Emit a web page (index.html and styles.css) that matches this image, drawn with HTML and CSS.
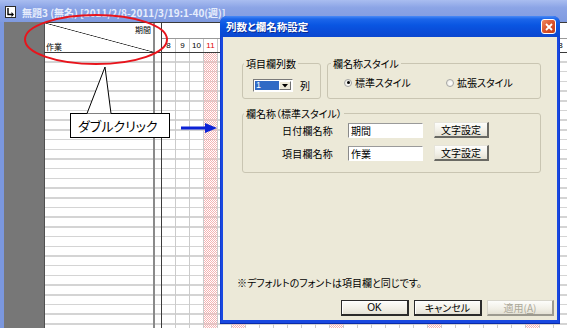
FILE: index.html
```html
<!DOCTYPE html>
<html lang="ja">
<head>
<meta charset="utf-8">
<title>列数と欄名称設定</title>
<link rel="stylesheet" href="styles.css">
</head>
<body>
<div class="screen">
  <div class="app">
    <div class="app-title">
      <svg class="app-icon" width="11" height="12" viewBox="0 0 11 12">
        <rect x="0.5" y="0.5" width="10" height="11" fill="#fff" stroke="#2b2b2b"/>
        <path d="M3 2 V8.5 H7" fill="none" stroke="#000" stroke-width="1.4"/>
        <path d="M6.5 6 L9 8.5 L6.5 11 Z" fill="#000"/>
      </svg>
      <span>無題3 (無名) [2011/2/8-2011/3/19:1-40(週)]</span>
    </div>
    <div class="app-body">
      <div class="side"></div>
      <div class="sheet">
        <div class="sheet-head">
          <div class="corner"><span class="corner-top">期間</span><span class="corner-bottom">作業</span></div>
          <div class="sep"></div>
          <div class="date-head">
            <div class="date-top"></div>
            <div class="date-nums">
              <span class="dn">8</span><span class="dn">9</span><span class="dn">10</span><span class="dn red">11</span><span class="dn">12</span><span class="dn red">13</span><span class="dn">14</span><span class="dn">15</span><span class="dn">16</span><span class="dn">17</span><span class="dn">18</span><span class="dn">19</span><span class="dn red">20</span><span class="dn">21</span><span class="dn">22</span><span class="dn">23</span><span class="dn">24</span><span class="dn">25</span><span class="dn">26</span><span class="dn red">27</span><span class="dn">28</span><span class="dn">1</span><span class="dn">2</span><span class="dn">3</span><span class="dn">4</span><span class="dn">5</span><span class="dn red">6</span><span class="dn">7</span><span class="dn">8</span>
            </div>
          </div>
        </div>
        <div class="sheet-body">
          <div class="rh-body"></div>
          <div class="sep"></div>
          <div class="date-cols">
            <span class="dc"></span><span class="dc"></span><span class="dc"></span><span class="dc off"></span><span class="dc"></span><span class="dc off"></span><span class="dc"></span><span class="dc"></span><span class="dc"></span><span class="dc"></span><span class="dc"></span><span class="dc"></span><span class="dc off"></span><span class="dc"></span><span class="dc"></span><span class="dc"></span><span class="dc"></span><span class="dc"></span><span class="dc"></span><span class="dc off"></span><span class="dc"></span><span class="dc"></span><span class="dc"></span><span class="dc"></span><span class="dc"></span><span class="dc"></span><span class="dc off"></span><span class="dc"></span><span class="dc"></span>
          </div>
        </div>
      </div>
    </div>
  </div>

  <svg class="mark-ellipse" width="148" height="54" viewBox="0 0 148 54">
    <ellipse cx="72" cy="25.5" rx="71" ry="24.5" fill="none" stroke="#e8141c" stroke-width="2"/>
  </svg>

  <div class="callout">ダブルクリック</div>
  <svg class="callout-tail" width="28" height="49" viewBox="0 0 28 49">
    <polyline points="2,48.5 20,2 26,48.5" fill="#fff" stroke="#000" stroke-width="1"/>
  </svg>

  <svg class="arrow" width="38" height="12" viewBox="0 0 38 12">
    <line x1="1" y1="6" x2="27" y2="6" stroke="#0c22d6" stroke-width="3"/>
    <polygon points="25,1 37,6 25,11" fill="#0c22d6"/>
  </svg>

  <div class="dialog">
    <div class="dlg-title">
      <span class="dlg-caption">列数と欄名称設定</span>
      <span class="dlg-close">
        <svg width="8" height="8" viewBox="0 0 8 8"><path d="M1 1 L7 7 M7 1 L1 7" stroke="#fff" stroke-width="1.8"/></svg>
      </span>
    </div>
    <div class="dlg-body">
      <div class="grp-row">
        <div class="grp grp-cols">
          <span class="grp-label">項目欄列数</span>
          <div class="combo">
            <span class="combo-val">1</span>
            <span class="combo-btn"><svg width="6" height="4" viewBox="0 0 6 4"><polygon points="0,0 6,0 3,3.5" fill="#000"/></svg></span>
          </div>
          <span class="unit">列</span>
        </div>
        <div class="grp grp-style">
          <span class="grp-label grp-label-wide">欄名称スタイル</span>
          <span class="radio radio-first"><span class="radio-dot checked"></span>標準スタイル</span>
          <span class="radio"><span class="radio-dot"></span>拡張スタイル</span>
        </div>
      </div>
      <div class="grp grp-names">
        <span class="grp-label">欄名称（標準スタイル）</span>
        <div class="name-row">
          <span class="name-label">日付欄名称</span>
          <span class="field">期間</span>
          <span class="btn btn-raised">文字設定</span>
        </div>
        <div class="name-row">
          <span class="name-label">項目欄名称</span>
          <span class="field">作業</span>
          <span class="btn btn-raised">文字設定</span>
        </div>
      </div>
      <p class="note">※デフォルトのフォントは項目欄と同じです。</p>
      <div class="actions">
        <span class="btn btn-frame btn-ok">OK</span>
        <span class="btn btn-frame btn-cancel">キャンセル</span>
        <span class="btn btn-disabled btn-apply">適用(<u>A</u>)</span>
      </div>
    </div>
  </div>
</div>
</body>
</html>
```
FILE: styles.css
```css
* { box-sizing: border-box; margin: 0; padding: 0; }

body {
  margin: 0;
  width: 567px;
  height: 328px;
  overflow: hidden;
  background: #fff;
  font-family: "Noto Sans CJK JP", "Noto Sans", sans-serif;
  font-feature-settings: "palt";
  color: #000;
}

.screen {
  position: relative;
  width: 567px;
  height: 328px;
  overflow: hidden;
  background: #fff;
}

/* background application window */
.app { display: flex; flex-direction: column; height: 100%; }

.app-title {
  height: 22px;
  flex: none;
  display: flex;
  align-items: center;
  gap: 6px;
  padding: 2px 0 0 5px;
  background: linear-gradient(#a9bdf0, #8ba4e6 35%, #7f9ae0);
  color: #e6edfc;
  font-size: 10px;
  font-weight: bold;
  white-space: nowrap;
}
.app-icon { flex: none; }

.app-body { flex: 1; display: flex; min-height: 0; }

.side {
  width: 44px;
  flex: none;
  background: #777;
  border-left: 4px solid #7b97de;
}

.sheet {
  flex: 1;
  display: flex;
  flex-direction: column;
  border-top: 1px solid #3a3a3a;
  background: #fff;
}

.sheet-head {
  height: 30px;
  flex: none;
  display: flex;
  border-bottom: 1px solid #3a3a3a;
}

.corner {
  width: 109px;
  flex: none;
  border-left: 1px solid #505050;
  display: flex;
  flex-direction: column;
  justify-content: space-between;
  padding: 2px 2px 0 1px;
  font-size: 8px;
  line-height: 10px;
  background: linear-gradient(to top right, transparent calc(50% - 0.7px), #2a2a2a 50%, transparent calc(50% + 0.7px));
}
.corner-top { align-self: flex-end; }
.corner-bottom { align-self: flex-start; }

.sep {
  width: 9px;
  flex: none;
  border-left: 2px solid #8a8a8a;
  border-right: 1px solid #3c3c3c;
}

.date-head { flex: 1; display: flex; flex-direction: column; min-width: 0; }
.date-top { height: 16px; border-bottom: 1px solid #9a9a9a; }
.date-nums { height: 13px; display: flex; }
.dn {
  width: 14px;
  flex: none;
  border-right: 1px solid #c8c8c8;
  text-align: center;
  font-family: "Liberation Sans", Arial, sans-serif;
  font-size: 8px;
  line-height: 13px;
}
.dn.red { color: #e00000; }

.sheet-body {
  flex: 1;
  display: flex;
  background: repeating-linear-gradient(to bottom, transparent 0, transparent 8.2px, #d4d4d4 8.2px, #d4d4d4 9.7px);
}
.rh-body { width: 109px; flex: none; border-left: 1px solid #505050; }
.date-cols { flex: 1; display: flex; min-width: 0; }
.dc { width: 14px; flex: none; border-right: 1px solid #cbcbcb; }
.dc.off {
  background: repeating-conic-gradient(#f5b3b3 0 25%, transparent 0 50%) 0 0 / 2px 2px;
}

/* annotations */
.mark-ellipse { position: absolute; left: 24px; top: 14px; }

.callout {
  position: absolute;
  left: 70px;
  top: 113px;
  width: 100px;
  height: 25px;
  border: 1px solid #000;
  background: #fff;
  padding-left: 7px;
  font-size: 13px;
  line-height: 23px;
  white-space: nowrap;
}
.callout-tail { position: absolute; left: 85px; top: 65px; }

.arrow { position: absolute; left: 180px; top: 122px; }

/* dialog window */
.dialog {
  position: absolute;
  left: 220px;
  top: 16px;
  width: 340px;
  height: 308px;
  display: flex;
  flex-direction: column;
  padding: 0 3px 3px;
  background: linear-gradient(to right, #0a2fc0, #1848e0 1px, #1848e0 calc(100% - 1px), #0a2fc0);
  border-radius: 7px 7px 0 0;
  border-bottom: 1px solid #0a2aa8;
}

.dlg-title {
  height: 21px;
  flex: none;
  margin: 0 -3px;
  padding: 0 4px 0 6px;
  display: flex;
  align-items: center;
  justify-content: space-between;
  border-radius: 7px 7px 0 0;
  background: linear-gradient(#4a8af6 0, #1c66ea 3px, #0a56e2 9px, #0a50dc 60%, #0b47d0 100%);
  color: #fff;
  font-size: 10.5px;
  font-weight: bold;
  text-shadow: 1px 1px 0 #0a2a90;
}

.dlg-close {
  width: 15px;
  height: 15px;
  display: flex;
  align-items: center;
  justify-content: center;
  border: 1px solid #fff;
  border-radius: 3px;
  background: linear-gradient(135deg, #f08a62, #d9532c 50%, #c23c18);
}

.dlg-body {
  flex: 1;
  display: flex;
  flex-direction: column;
  background: #ece9d8;
  padding: 26px 16px 4px 19px;
  font-size: 10px;
  line-height: 13px;
}

.grp-row { display: flex; gap: 6px; height: 36px; flex: none; }

.grp {
  position: relative;
  border: 1px solid #c9c5b2;
  border-radius: 3px;
}
.grp-label {
  position: absolute;
  top: -7px;
  left: 1px;
  padding: 0 2px;
  background: #ece9d8;
  white-space: nowrap;
}
.grp-label-wide { left: 3px; }

.grp-cols {
  width: 79px;
  flex: none;
  display: flex;
  align-items: center;
  gap: 7px;
  padding: 9px 0 0 10px;
}

.combo {
  width: 40px;
  height: 13px;
  display: flex;
  border: 1px solid;
  border-color: #7a7a7a #fff #fff #7a7a7a;
  background: #fff;
  padding: 1px;
}
.combo-val {
  flex: 1;
  background: #316ac5;
  color: #fff;
  font-family: "Liberation Sans", Arial, sans-serif;
  font-size: 9px;
  line-height: 9px;
  padding-left: 1px;
}
.combo-btn {
  width: 12px;
  flex: none;
  display: flex;
  align-items: center;
  justify-content: center;
  background: #ece9d8;
  border: 1px solid;
  border-color: #fff #6f6f6f #6f6f6f #fff;
}

.unit { font-size: 10px; }

.grp-style {
  flex: 1;
  display: flex;
  align-items: center;
  padding: 3px 0 0 16px;
}
.radio { display: flex; align-items: center; gap: 3px; white-space: nowrap; }
.radio-first { width: 102px; flex: none; }
.radio-dot {
  width: 8px;
  height: 8px;
  flex: none;
  border-radius: 50%;
  border: 1px solid #a5a5a5;
  background: radial-gradient(circle at 60% 60%, #fff, #e9e7dd);
  display: flex;
  align-items: center;
  justify-content: center;
}
.radio-dot.checked::after {
  content: "";
  width: 3px;
  height: 3px;
  border-radius: 50%;
  background: #000;
}

.grp-names {
  height: 60px;
  flex: none;
  margin-top: 14px;
  padding: 8px 0 0 39px;
  display: flex;
  flex-direction: column;
  gap: 7px;
}
.name-row { display: flex; align-items: center; height: 16px; }
.name-label { width: 66px; flex: none; letter-spacing: 0.2px; }
.field {
  width: 75px;
  height: 15px;
  flex: none;
  background: #fff;
  border: 1px solid;
  border-color: #9a9a9a #fff #fff #8a8a8a;
  padding-left: 2px;
  line-height: 13px;
}

.btn {
  display: flex;
  align-items: center;
  justify-content: center;
  height: 16px;
  flex: none;
  font-size: 10px;
  white-space: nowrap;
  background: linear-gradient(#fdfdfb, #f1efe6 60%, #e4e1d4);
}
.btn-raised {
  width: 55px;
  margin-left: 11px;
  border: 1px solid;
  border-color: #e6e4da #6a6a64 #6a6a64 #e6e4da;
  border-right-width: 2px;
  border-bottom-width: 2px;
}

.note { margin-top: auto; margin-left: -5px; white-space: nowrap; }

.actions {
  display: flex;
  justify-content: flex-end;
  gap: 5px;
  margin-top: 11px;
  margin-right: -13px;
}
.btn-frame {
  width: 68px;
  border: 1px solid #2a2a2a;
  border-right-width: 2px;
  border-bottom-width: 2px;
  box-shadow: inset 1px 1px 0 #fff;
}
.btn-ok { font-family: "Liberation Sans", Arial, sans-serif; font-size: 10px; }
.btn-disabled {
  width: 67px;
  border: 1px solid;
  border-color: #d8d6cc #9c9a90 #9c9a90 #d8d6cc;
  border-right-width: 2px;
  border-bottom-width: 2px;
  color: #aca899;
}
.btn-apply u { text-decoration: underline; }
```
